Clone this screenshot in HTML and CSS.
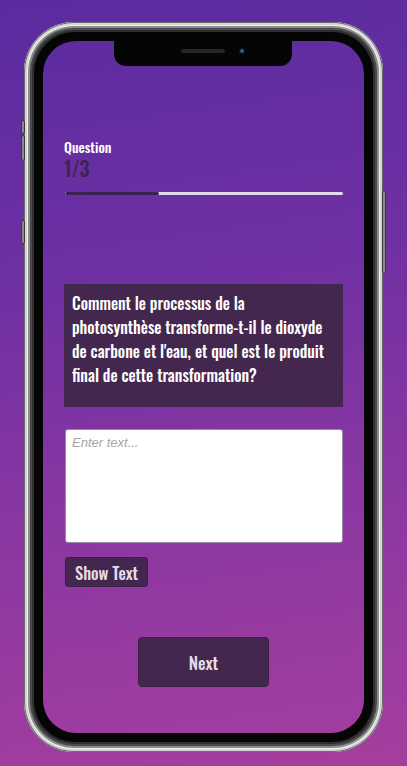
FILE: index.html
```html
<!DOCTYPE html>
<html lang="fr">
<head>
<meta charset="utf-8">
<title>Quiz</title>
<link rel="stylesheet" href="styles.css">
</head>
<body>
<div class="phone">
  <span class="side side-l1"></span>
  <span class="side side-l2"></span>
  <span class="side side-l3"></span>
  <span class="side side-r1"></span>
  <div class="bezel">
    <div class="screen">
      <div class="notch"><span class="speaker"></span><span class="camera"></span></div>
      <main class="quiz">
        <div class="q-label">Question</div>
        <div class="q-count">1/3</div>
        <div class="progress"><div class="progress-fill" style="width:33.7%"></div></div>
        <div class="q-box">Comment le processus de la photosynthèse transforme-t-il le dioxyde de carbone et l'eau, et quel est le produit final de cette transformation?</div>
        <textarea class="answer" placeholder="Enter text..."></textarea>
        <button class="show-btn" type="button">Show Text</button>
        <button class="next-btn" type="button">Next</button>
      </main>
    </div>
  </div>
</div>
</body>
</html>
```

FILE: styles.css
```css
html, body {
  margin: 0;
  padding: 0;
}
body {
  width: 407px;
  height: 766px;
  overflow: hidden;
  background: linear-gradient(172deg, #5a2b9f 0%, #6f30a3 35%, #8e38a2 70%, #a53e9e 100%) fixed;
  font-family: "Oswald", "Roboto Condensed", "DejaVu Sans Condensed", "Liberation Sans", sans-serif;
  display: flex;
  justify-content: center;
  padding-top: 22px;
  box-sizing: border-box;
}
.phone {
  position: relative;
  width: 359px;
  height: 730px;
  box-sizing: border-box;
  padding: 10px;
  border-radius: 50px;
  background: #2e2e2e;
  box-shadow:
    inset 0 0 0 1px #6a6a6a,
    inset 0 0 0 3px #d6d6d6,
    inset 0 0 0 4px #f2f2f2,
    inset 0 0 0 6px #8c8c8c,
    inset 0 0 0 8px #4a4a4a;
}
.side {
  position: absolute;
  background: #8a8a8a;
  border: 1px solid #3a3a3a;
  border-radius: 2px;
}
.side-l1 { left: -3px; top: 98px; width: 2px; height: 12px; }
.side-l2 { left: -3px; top: 113px; width: 2px; height: 24px; }
.side-l3 { left: -3px; top: 198px; width: 2px; height: 22px; }
.side-r1 { right: -3px; top: 168px; width: 2px; height: 82px; }
.bezel {
  height: 100%;
  box-sizing: border-box;
  padding: 9px;
  border-radius: 41px;
  background: #050505;
}
.screen {
  position: relative;
  height: 100%;
  border-radius: 33px;
  overflow: hidden;
  background: linear-gradient(172deg, #5a2b9f 0%, #6f30a3 35%, #8e38a2 70%, #a53e9e 100%) fixed;
}
.notch {
  position: absolute;
  top: 0;
  left: 71px;
  width: 178px;
  height: 25px;
  background: #050505;
  border-radius: 0 0 12px 12px;
  display: flex;
  align-items: center;
  justify-content: center;
  gap: 14px;
  padding-left: 19px;
  box-sizing: border-box;
}
.speaker {
  width: 44px;
  height: 4px;
  border-radius: 3px;
  background: #262626;
  margin-top: -6px;
}
.camera {
  width: 6px;
  height: 6px;
  border-radius: 50%;
  background: radial-gradient(circle at 50% 50%, #4a6a9a 0 1px, #17223a 2px, #0c1220 3px);
  margin-top: -5px;
}
.quiz {
  display: flex;
  flex-direction: column;
  align-items: flex-start;
  padding: 99px 21px 0 21px;
}
.q-label {
  color: #ffffff;
  font-size: 14px;
  font-weight: 500;
  line-height: 14px;
}
.q-count {
  color: #3d2352;
  font-size: 20px;
  font-weight: 500;
  line-height: 20px;
  margin-top: 4px;
}
.progress {
  align-self: stretch;
  height: 3px;
  margin: 14px 0 0 1px;
  border-radius: 2px;
  background: #e2dce6;
  overflow: hidden;
}
.progress-fill {
  height: 100%;
  background: #3d2150;
  border-radius: 2px;
}
.q-box {
  align-self: stretch;
  margin-top: 89px;
  padding: 7px 12px 20px 8px;
  background: #43274f;
  color: #ffffff;
  font-size: 16px;
  font-weight: 500;
  line-height: 24px;
}
.answer {
  display: block;
  align-self: stretch;
  margin: 22px 0 0 1px;
  height: 114px;
  box-sizing: border-box;
  border: 1px solid #9c8aa8;
  border-radius: 3px;
  background: #ffffff;
  padding: 5px 6px;
  resize: none;
  font-family: "Liberation Sans", Arial, sans-serif;
  font-size: 13px;
}
.answer::placeholder {
  color: #a5a5a5;
  font-style: italic;
}
.show-btn {
  margin: 14px 0 0 1px;
  height: 30px;
  width: 83px;
  padding: 0;
  border: 1px solid #3a2045;
  border-radius: 3px;
  background: #43274f;
  color: #e6dde6;
  font-family: inherit;
  font-size: 16.5px;
  font-weight: 500;
  white-space: nowrap;
}
.next-btn {
  align-self: center;
  margin-top: 50px;
  width: 131px;
  height: 50px;
  padding: 0;
  border: 1px solid #3a2045;
  border-radius: 4px;
  background: #43274f;
  color: #e6dde6;
  font-family: inherit;
  font-size: 17px;
  font-weight: 500;
}
```
